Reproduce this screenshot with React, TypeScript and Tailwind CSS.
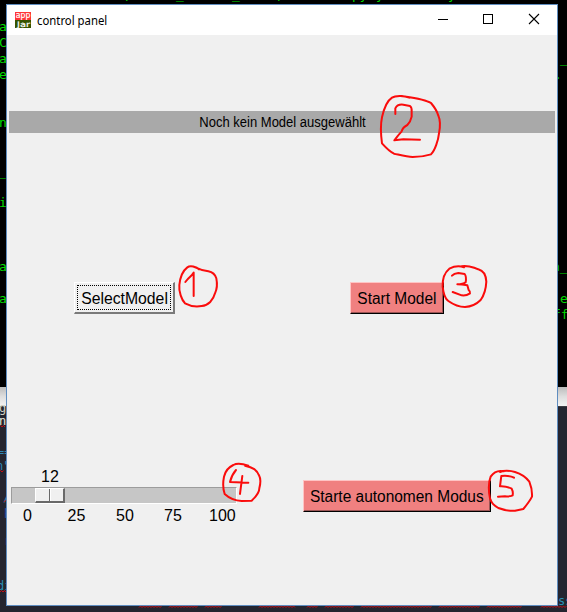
const ARIAL = "font-['Liberation_Sans',sans-serif]";

type Glyph = { text: string; className: string };

// Fragments of the terminal and the editor that peek out behind the window.
const terminal: Glyph[] = [
  { text: 'a', className: 'left-[-1px] top-[18px]' },
  { text: 'C', className: 'left-[-1px] top-[34px]' },
  { text: 'a', className: 'left-[-1px] top-[50px]' },
  { text: 'e', className: 'left-[-1px] top-[66px]' },
  { text: 'n', className: 'left-[-1px] top-[114px]' },
  { text: '_', className: 'left-[-2px] top-[163px]' },
  { text: 'i', className: 'left-[-1px] top-[194px]' },
  { text: 'a', className: 'left-[-1px] top-[258px]' },
  { text: 'a', className: 'left-[-1px] top-[290px]' },
  { text: 'p', className: 'left-[125px] top-[-15px]' },
  { text: '_', className: 'left-[176px] top-[-14px]' },
  { text: '_', className: 'left-[232px] top-[-14px]' },
  { text: 'p', className: 'left-[277px] top-[-15px]' },
  { text: 'py', className: 'left-[352px] top-[-14px]' },
  { text: 'y', className: 'left-[376px] top-[-14px]' },
  { text: 'y', className: 'left-[448px] top-[-14px]' },
  { text: '_', className: 'left-[560px] top-[50px]' },
  { text: '.', className: 'left-[554px] top-[66px]' },
  { text: 'n_', className: 'left-[552px] top-[258px]' },
  { text: 'e', className: 'left-[560px] top-[290px]' },
  { text: 'ff', className: 'left-[553px] top-[306px]' },
];

const editor: Glyph[] = [
  { text: 'g', className: 'left-[-1px] top-[400px] text-[#cfcfc2]' },
  { text: 'n', className: 'left-[-1px] top-[413px] text-[#e8e8da]' },
  { text: '==', className: 'left-[-3px] top-[444px] text-[#2f86b5]' },
  { text: 'n"', className: 'left-[-4px] top-[458px] text-[#2f86b5]' },
  { text: '/', className: 'left-[3px] top-[489px] text-[#2f86b5]' },
  { text: 'p', className: 'left-[4px] top-[503px] text-[#2450a0]' },
  { text: 'r', className: 'left-[4px] top-[533px] text-[#2450a0]' },
  { text: 'di', className: 'left-[-3px] top-[578px] text-[#2a8fb5]' },
  { text: 'ss', className: 'left-[558px] top-[593px] text-[#2a8fb5]' },
];

const squiggles = [
  [-1, 5, 427], [-1, 4, 472], [4, 7, 502], [0, 7, 592],
  [139, 162, 607.5], [169, 198, 607.5], [205, 222, 607.5], [259, 295, 607.5], [307, 318, 607.5],
  [325, 354, 607.5], [361, 432, 607.5], [439, 480, 607.5], [487, 522, 607.5], [541, 567, 607.5],
];

function zigzag([from, to, y]: number[]) {
  let d = `M${from} ${y}`;
  for (let x = from + 1.5, up = true; x <= to; x += 1.5, up = !up) d += ` L${x} ${up ? y - 1.5 : y}`;
  return d;
}

function Backdrop() {
  return (
    <div className="absolute inset-0 bg-black">
      <div className="absolute inset-x-0 top-[387px] h-[19px] bg-gradient-to-b from-[#bcbcbc] via-[#dedede] to-[#f3f3f3]" />
      <div className="absolute inset-x-0 top-[406px] bottom-0 border-t border-[#3b3b42] bg-[#242530]" />
      <div className="font-['DejaVu_Sans_Mono',monospace] text-[13px] leading-[18px] whitespace-pre text-[#00d900]">
        {terminal.map((g, i) => (
          <span key={i} className={`absolute ${g.className}`}>{g.text}</span>
        ))}
      </div>
      <div className="font-['DejaVu_Sans_Mono',monospace] text-[12px] leading-4 whitespace-pre">
        {editor.map((g, i) => (
          <span key={i} className={`absolute ${g.className}`}>{g.text}</span>
        ))}
      </div>
      <svg className="absolute inset-0" width="567" height="612" fill="none" stroke="#d40d12" strokeWidth="0.9">
        {squiggles.map((s, i) => <path key={i} d={zigzag(s)} />)}
      </svg>
    </div>
  );
}

function AppIcon() {
  return (
    <svg width="16" height="16" viewBox="0 0 16 16" className="shrink-0">
      <rect width="16" height="8" fill="#ff3434" />
      <rect y="8" width="16" height="8" fill="#375400" />
      <g fill="#fff" stroke="#fff" strokeWidth="0.2" fontFamily="DejaVu Sans" fontSize="8">
        <text x="0.8" y="5.9" textLength="14.6" lengthAdjust="spacingAndGlyphs">app</text>
        <text x="2" y="15" fontSize="7.5" textLength="13" lengthAdjust="spacingAndGlyphs">Jar</text>
      </g>
    </svg>
  );
}

function TitleBar() {
  return (
    <header className="flex h-[30px] items-center bg-white pl-2">
      <AppIcon />
      <span className="ml-[6px] w-[72px] origin-left scale-x-[0.945] font-['Noto_Sans',sans-serif] text-[12px] leading-[15px] whitespace-nowrap text-black">
        control panel
      </span>
      <svg className="ml-auto" width="146" height="30" fill="none" stroke="#000" shapeRendering="crispEdges">
        <path d="M27 14.5H37" />
        <rect x="72.5" y="9.5" width="9" height="9" />
        <path d="M118 9L128 19M128 9L118 19" shapeRendering="auto" strokeWidth="1.1" />
      </svg>
    </header>
  );
}

function SalmonButton({ label, className }: { label: string; className: string }) {
  return (
    <button
      className={`flex h-8 items-center justify-center border border-t-[#ffc4c4] border-r-black border-b-black border-l-[#ffc4c4] bg-[#f08080] pt-[2px] text-base whitespace-nowrap text-black shadow-[inset_-1px_-1px_0_#9b5555] ${className}`}
    >
      <span className="inline-block scale-x-[0.967]">{label}</span>
    </button>
  );
}

function Scale() {
  return (
    <div className="w-[226px] text-base leading-[18px]">
      <div className="flex h-[19px] pl-[30px]">12</div>
      <div className="flex h-[17px] border border-t-[#9c9c9c] border-r-white border-b-white border-l-[#9c9c9c] bg-[#c6c6c6] pl-[23px]">
        <div className="flex h-[15px] w-[30px] border-t border-r-2 border-b-2 border-l border-t-white border-r-[#696969] border-b-[#696969] border-l-white bg-[#f0f0f0]">
          <div className="w-[14px] border-r border-[#696969]" />
          <div className="flex-1 border-l border-white" />
        </div>
      </div>
      <div className="mt-[3px] flex">
        <span className="w-[33px] text-center">0</span>
        <span className="w-[65px] text-center">25</span>
        <span className="w-[32px] text-center">50</span>
        <span className="w-[64px] text-center">75</span>
        <span className="pl-[4px]">100</span>
      </div>
    </div>
  );
}

function Annotations() {
  return (
    <svg
      className="pointer-events-none absolute inset-0"
      width="567"
      height="612"
      fill="none"
      stroke="#fa0c0c"
      strokeWidth="6"
      strokeLinecap="round"
      strokeLinejoin="round"
    >
      <g transform="scale(.33333) translate(0 750)">
        <path d="M597 58C590 50 570 46 562 52C545 65 540 85 538 105C536 125 545 150 555 160C570 168 590 171 605 168C625 166 640 150 645 130C652 115 652 100 649 85C645 72 635 66 625 64C610 62 595 57 580 50" />
        <path d="M556 96Q562 88 575 76L581 68V138" />
      </g>
      <g transform="scale(.33333) translate(1080 0)">
        <path d="M148 293C130 285 105 287 96 293C82 302 72 325 66 352C60 380 62 400 66 430C75 440 90 455 102 461C120 465 140 471 158 471C175 471 200 467 213 463C225 452 235 420 237 400C242 375 241 360 235 347C232 335 218 315 213 309C195 297 160 293 125 288" />
        <path d="M106 342V325Q112 312 130 314L150 318Q156 322 155 335V350Q152 365 142 375Q128 382 125 394Q115 405 103 421L130 418L180 419" />
      </g>
      <g transform="scale(.33333) translate(990 750)">
        <path d="M402 52C385 46 372 49 358 56C343 68 337 85 338 110C340 130 343 145 355 153C372 165 390 171 405 171C425 170 440 162 452 150C463 135 468 115 469 95C468 75 460 62 445 58C430 50 405 46 395 49" />
        <path d="M366 77Q372 70 385 69L404 72Q410 80 407 97Q400 103 382 103Q395 103 412 106L416 120Q422 125 420 130Q408 138 395 136L368 126" />
      </g>
      <g transform="scale(.33333) translate(0 1350)">
        <path d="M745 47C725 40 712 38 700 45C685 52 676 62 672 80C668 100 670 120 674 132C688 145 705 152 725 153L755 152C768 140 778 128 778 115C782 100 782 85 777 76C770 60 760 52 735 47" />
        <path d="M708 60Q695 75 690 96L745 98M727 78L720 132" />
      </g>
      <g transform="scale(.33333) translate(840 1350)">
        <path d="M672 64C655 60 640 68 632 80C624 100 626 125 630 145C635 160 640 165 655 174C672 180 690 184 705 182L730 177C740 165 750 152 756 140C757 125 752 105 748 95C735 78 725 72 705 66C690 62 670 62 660 66" />
        <path d="M702 83Q690 76 664 78L660 109Q680 108 695 116Q700 125 698 136Q690 140 675 139L654 140" />
      </g>
    </svg>
  );
}

export default function App() {
  return (
    <div className="relative h-[612px] w-[567px] overflow-hidden">
      <Backdrop />
      <div className={`absolute top-1 left-1.5 flex h-[602px] w-[552px] flex-col border border-[#5f8dc0] bg-[#f0f0f0] text-black ${ARIAL}`}>
        <TitleBar />
        <main className="flex flex-1 flex-col pt-[76px]">
          <div className="mr-0.5 ml-0.5 flex h-[22px] items-center justify-center bg-[#a9a9a9] pt-px text-[14px]">
            <span className="inline-block scale-x-[0.93]">Noch kein Model ausgewählt</span>
          </div>
          <div className="mt-[149px] flex pl-[67px]">
            <button className="flex h-8 w-[101px] border-t border-r-2 border-b-2 border-l border-t-white border-r-[#7a7a7a] border-b-[#7a7a7a] border-l-white bg-[#f0f0f0] p-[2px]">
              <span className="flex flex-1 items-center justify-center self-stretch border border-dotted border-black pt-[2px] text-base whitespace-nowrap">
                <span className="inline-block translate-x-[0.5px] scale-x-[0.985]">SelectModel</span>
              </span>
            </button>
            <SalmonButton label="Start Model" className="ml-[175px] w-[94px]" />
          </div>
          <div className="mt-[154px] flex items-start pl-1">
            <Scale />
            <SalmonButton label="Starte autonomen Modus" className="mt-[12px] ml-[66px] w-[188px]" />
          </div>
        </main>
      </div>
      <Annotations />
    </div>
  );
}
